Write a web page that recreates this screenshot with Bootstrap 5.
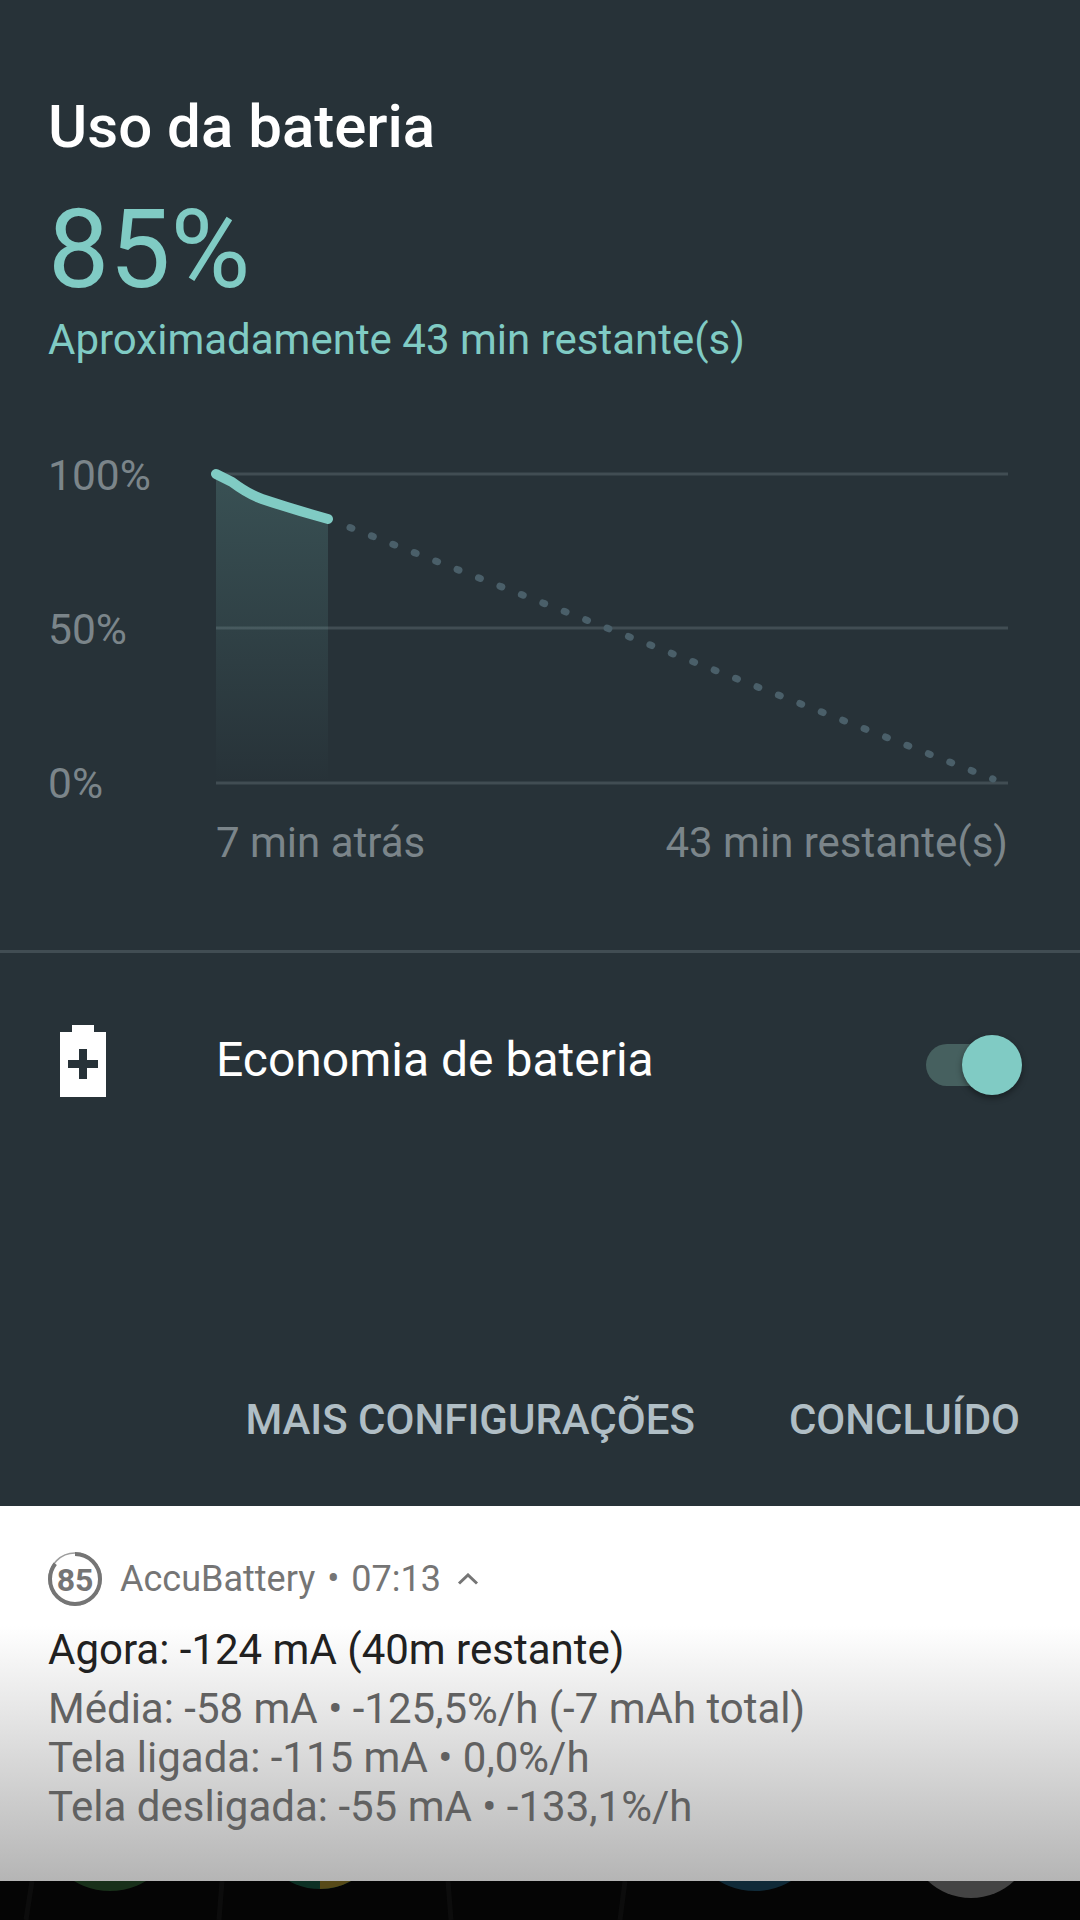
<!DOCTYPE html>
<html lang="pt-BR">
<head>
    <meta charset="UTF-8">
    <meta name="viewport" content="width=device-width, initial-scale=1.0">
    <title>Uso da bateria</title>
    <link href="https://cdn.jsdelivr.net/npm/bootstrap@5.3.0/dist/css/bootstrap.min.css" rel="stylesheet">
    <style>
        body {
            background: #000;
            font-family: Roboto, "Liberation Sans", sans-serif;
            width: 1080px;
            height: 1920px;
            overflow: hidden;
        }
        .painel {
            background: #273238;
            height: 1506px;
        }
        .titulo {
            font-size: 60px;
            font-weight: 500;
            line-height: 72px;
            color: #fff;
            padding: 91px 0 0 48px;
        }
        .percentual {
            font-size: 109px;
            line-height: 120px;
            color: #80cbc4;
            padding: 27px 0 0 48px;
        }
        .restante {
            font-size: 42px;
            line-height: 56px;
            color: #80cbc4;
            padding: 2px 0 0 48px;
        }
        .grafico {
            margin-top: 84px;
            height: 356px;
        }
        .grafico svg {
            overflow: visible;
        }
        .eixo-y {
            width: 216px;
            padding-left: 48px;
            font-size: 42.500px;
            line-height: 48px;
            color: #7b858a;
        }
        .eixo-x {
            margin: 11px 72px 0 216px;
            font-size: 42px;
            line-height: 48px;
            color: #7b858a;
        }
        .divisor {
            height: 3px;
            background: #414d53;
            margin-top: 83px;
        }
        .economia {
            height: 234px;
            padding-bottom: 18px;
        }
        .economia-icone {
            width: 216px;
            padding-left: 60px;
        }
        .economia-texto {
            font-size: 48px;
            color: #fff;
            padding-bottom: 2px;
        }
        .chave {
            width: 84px;
            height: 42px;
            border-radius: 21px;
            background: #46605f;
            margin: 8px 70px 0 0;
        }
        .chave-botao {
            width: 60px;
            height: 60px;
            border-radius: 50%;
            background: #80cbc4;
            position: absolute;
            top: -9px;
            right: -12px;
            box-shadow: 0 3px 6px rgba(0, 0, 0, .4);
        }
        .acoes {
            padding: 209px 60px 0 0;
            gap: 94px;
        }
        .acao {
            font-size: 42px;
            font-weight: 500;
            line-height: 48px;
            color: #b0bec5;
        }
        .notificacao {
            height: 375px;
            background: linear-gradient(#fff 0, #fff 120px, #b5b5b5 100%);
            padding: 46px 0 0 48px;
        }
        .notif-topo {
            font-size: 36px;
            line-height: 54px;
            color: #757575;
            gap: 18px;
        }
        .ponto {
            margin: 0 3px;
        }
        .notif-linha1 {
            font-size: 42px;
            line-height: 49px;
            color: #212121;
            margin-top: 19px;
        }
        .notif-resto {
            font-size: 42px;
            line-height: 49px;
            color: #616161;
            margin-top: 10px;
        }
        .fundo {
            display: block;
        }
    </style>
</head>
<body>
    <div class="painel">
        <div class="titulo">Uso da bateria</div>
        <div class="percentual">85%</div>
        <div class="restante">Aproximadamente 43 min restante(s)</div>

        <div class="grafico d-flex">
            <div class="eixo-y d-flex flex-column justify-content-between">
                <div>100%</div>
                <div>50%</div>
                <div>0%</div>
            </div>
            <svg width="800" height="356" viewBox="216 452 800 356">
                <defs>
                    <linearGradient id="area" x1="0" y1="0" x2="0" y2="1">
                        <stop offset="0" stop-color="#80cbc4" stop-opacity=".2"/>
                        <stop offset="1" stop-color="#80cbc4" stop-opacity="0"/>
                    </linearGradient>
                </defs>
                <path d="M216 474 H1008 M216 628 H1008 M216 783 H1008" stroke="#414d53" stroke-width="3" fill="none"/>
                <path d="M216 474 L235 484 Q248 494 262 499 L328 519 V783 H216 Z" fill="url(#area)"/>
                <path d="M350 527.500 L993 779" stroke="#4a5f69" stroke-width="7" stroke-linecap="round" stroke-dasharray="2 21" fill="none"/>
                <path d="M216 474 L232 482 Q248 494 262 499 Q295 510 328 519" stroke="#80cbc4" stroke-width="10" stroke-linecap="round" stroke-linejoin="round" fill="none"/>
            </svg>
        </div>
        <div class="eixo-x d-flex justify-content-between">
            <span>7 min atrás</span>
            <span>43 min restante(s)</span>
        </div>

        <div class="divisor"></div>

        <div class="economia d-flex align-items-center">
            <div class="economia-icone">
                <svg class="d-block" width="46" height="72" viewBox="0 0 46 72">
                    <path fill="#fff" fill-rule="evenodd" d="M12 0 H34 V7 H46 V72 H0 V7 H12 Z M19 24 V35 H8 V43 H19 V54 H27 V43 H38 V35 H27 V24 Z"/>
                </svg>
            </div>
            <div class="economia-texto flex-grow-1">Economia de bateria</div>
            <div class="chave position-relative">
                <div class="chave-botao"></div>
            </div>
        </div>

        <div class="acoes d-flex justify-content-end">
            <div class="acao">MAIS CONFIGURAÇÕES</div>
            <div class="acao">CONCLUÍDO</div>
        </div>
    </div>

    <div class="notificacao">
        <div class="notif-topo d-flex align-items-center">
            <svg width="54" height="54" viewBox="0 0 54 54">
                <circle cx="27" cy="27" r="26" fill="none" stroke="#9e9e9e" stroke-width="1.500"/>
                <circle cx="27" cy="27" r="25" fill="none" stroke="#757575" stroke-width="4" stroke-dasharray="133.500 157.100" transform="rotate(-90 27 27)"/>
                <text x="27" y="39" text-anchor="middle" font-family="Roboto" font-weight="700" font-size="32" fill="#757575">85</text>
            </svg>
            <div>AccuBattery<span class="ponto"> • </span>07:13</div>
            <svg width="22" height="12" viewBox="0 0 22 12" style="margin-left:-2px">
                <path d="M2 10.500 L11 2 L20 10.500" fill="none" stroke="#757575" stroke-width="3"/>
            </svg>
        </div>
        <div class="notif-linha1">Agora: -124 mA (40m restante)</div>
        <div class="notif-resto">
            Média: -58 mA • -125,5%/h (-7 mAh total)<br>
            Tela ligada: -115 mA • 0,0%/h<br>
            Tela desligada: -55 mA • -133,1%/h
        </div>
    </div>

    <svg class="fundo" width="1080" height="39" viewBox="0 0 1080 39">
        <rect width="1080" height="39" fill="#050505"/>
        <path d="M32 0 L26 39 M222 0 L219 39 M448 0 L451 39 M625 0 L620 39" stroke="#0c0c0c" stroke-width="5" fill="none"/>
        <circle cx="110" cy="-60" r="70" fill="#18301a"/>
        <circle cx="320" cy="-56" r="64" fill="#0c3024"/>
        <path d="M320 0 H351 A64 64 0 0 1 320 8 Z" fill="#574a18"/>
        <circle cx="755" cy="-60" r="70" fill="#102a38"/>
        <circle cx="971" cy="-46" r="63" fill="#444"/>
    </svg>

    <script src="https://cdn.jsdelivr.net/npm/bootstrap@5.3.0/dist/js/bootstrap.bundle.min.js"></script>
</body>
</html>
